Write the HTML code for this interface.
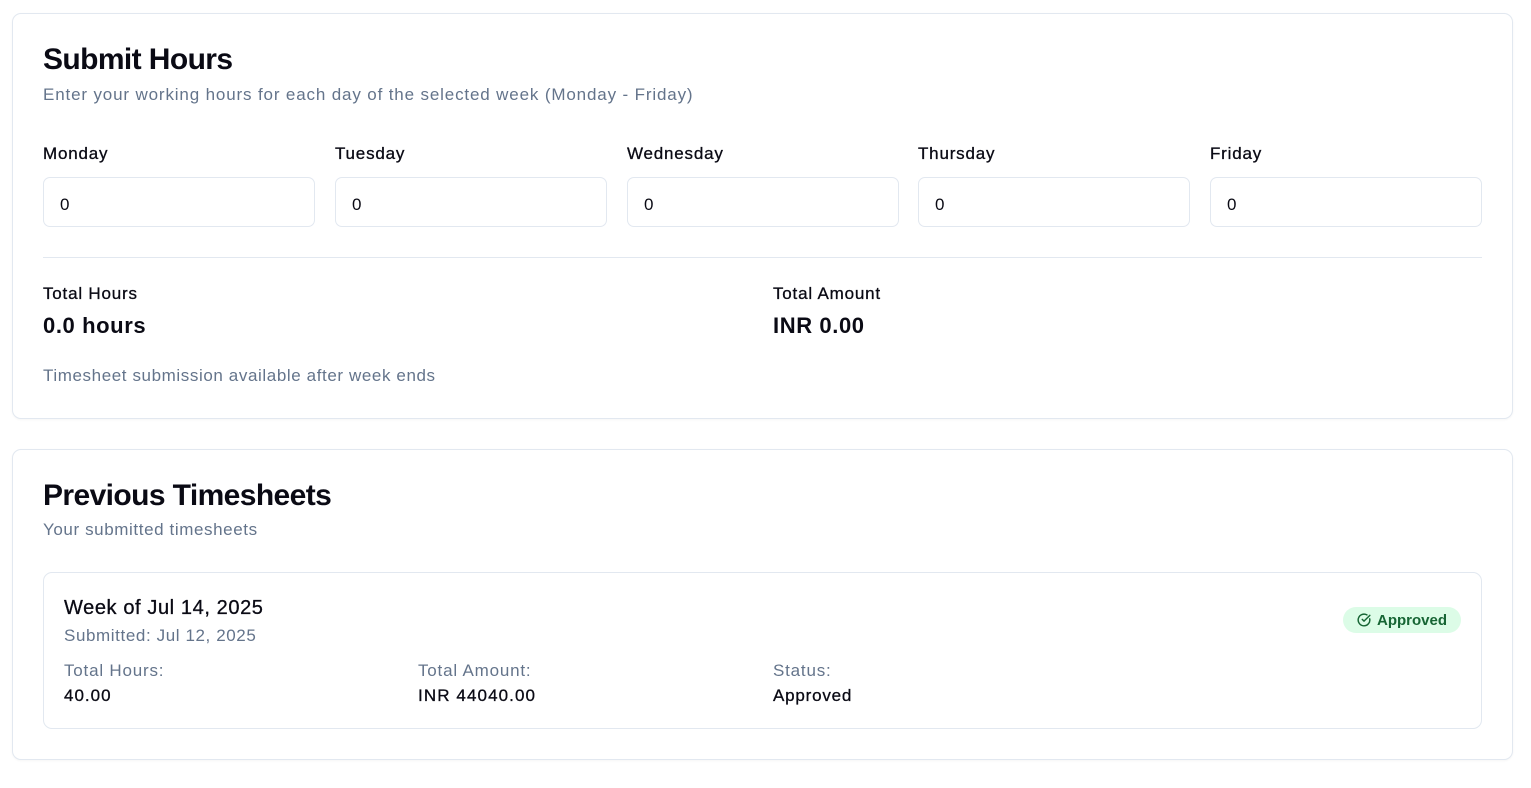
<!DOCTYPE html>
<html><head><style>
*{margin:0;padding:0;box-sizing:border-box}
body{width:1531px;height:788px;background:#fff;font-family:"Liberation Sans",sans-serif;color:#0a0a14;position:relative;overflow:hidden}
.a{position:absolute;white-space:nowrap;line-height:1;letter-spacing:0.8px}
.card{position:absolute;border:1px solid #e2e8f0;border-radius:9px;background:#fff;box-shadow:0 1px 2px rgba(0,0,0,.04)}
.inp{position:absolute;top:177px;width:272px;height:50px;border:1px solid #e2e8f0;border-radius:7px}
.inp span{position:absolute;left:16px;top:17px;font-size:17px}
.lbl{font-size:17px;top:145px}
.g{color:#64748b}
.b{-webkit-text-stroke:0.3px #0a0a14}
</style></head><body>
<div class="card" style="left:12px;top:13px;width:1501px;height:406px"></div>
<div class="a" style="left:43px;top:45px;font-size:30px;font-weight:bold;letter-spacing:-0.6px">Submit Hours</div>
<div class="a g" style="left:43px;top:86px;font-size:17px;letter-spacing:0.85px">Enter your working hours for each day of the selected week (Monday - Friday)</div>
<div class="a lbl b" style="left:43px">Monday</div>
<div class="a lbl b" style="left:335px">Tuesday</div>
<div class="a lbl b" style="left:627px">Wednesday</div>
<div class="a lbl b" style="left:918px">Thursday</div>
<div class="a lbl b" style="left:1210px">Friday</div>
<div class="inp" style="left:43px"><span>0</span></div>
<div class="inp" style="left:335px"><span>0</span></div>
<div class="inp" style="left:627px"><span>0</span></div>
<div class="inp" style="left:918px"><span>0</span></div>
<div class="inp" style="left:1210px"><span>0</span></div>
<div style="position:absolute;left:43px;top:257px;width:1439px;height:1px;background:#e2e8f0"></div>
<div class="a b" style="left:43px;top:285px;font-size:17px">Total Hours</div>
<div class="a" style="left:43px;top:315px;font-size:22px;font-weight:bold;letter-spacing:0.6px">0.0 hours</div>
<div class="a b" style="left:773px;top:285px;font-size:17px">Total Amount</div>
<div class="a" style="left:773px;top:315px;font-size:22px;font-weight:bold;letter-spacing:0.6px">INR 0.00</div>
<div class="a g" style="left:43px;top:367px;font-size:17px;letter-spacing:0.6px">Timesheet submission available after week ends</div>

<div class="card" style="left:12px;top:449px;width:1501px;height:311px"></div>
<div class="a" style="left:43px;top:481px;font-size:30px;font-weight:bold;letter-spacing:-0.6px">Previous Timesheets</div>
<div class="a g" style="left:43px;top:521px;font-size:17px;letter-spacing:0.6px">Your submitted timesheets</div>
<div class="card" style="left:43px;top:572px;width:1439px;height:157px;box-shadow:none"></div>
<div class="a b" style="left:64px;top:598px;font-size:20px;letter-spacing:0.6px">Week of Jul 14, 2025</div>
<div class="a g" style="left:64px;top:627px;font-size:17px;letter-spacing:0.6px">Submitted: Jul 12, 2025</div>
<div class="a g" style="left:64px;top:662px;font-size:17px">Total Hours:</div>
<div class="a b" style="left:64px;top:687px;font-size:17px;letter-spacing:1px">40.00</div>
<div class="a g" style="left:418px;top:662px;font-size:17px">Total Amount:</div>
<div class="a b" style="left:418px;top:687px;font-size:17px;letter-spacing:1.1px">INR 44040.00</div>
<div class="a g" style="left:773px;top:662px;font-size:17px">Status:</div>
<div class="a b" style="left:773px;top:687px;font-size:17px">Approved</div>
<div style="position:absolute;left:1343px;top:607px;width:118px;height:26px;border-radius:13px;background:#dcfce7;color:#166534;font-size:15px;font-weight:bold;line-height:28px">
<svg style="position:absolute;left:14px;top:6px" width="14" height="14" viewBox="0 0 24 24" fill="none" stroke="#166534" stroke-width="2.5" stroke-linecap="round" stroke-linejoin="round"><path d="M21.8 10A10 10 0 1 1 17 3.3"/><path d="M9 11l3 3L22 4"/></svg>
<span style="position:absolute;left:34px">Approved</span></div>
</body></html>
